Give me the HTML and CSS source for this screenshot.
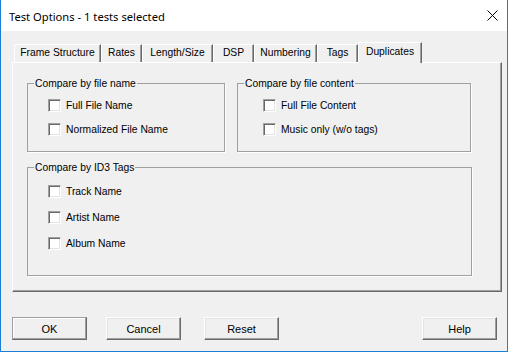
FILE: index.html
```html
<!DOCTYPE html>
<html lang="en">
<head>
  <meta charset="utf-8">
  <title>Test Options - 1 tests selected</title>
  <link rel="stylesheet" href="styles.css">
</head>
<body>
  <div class="window">
    <div class="titlebar">
      <span class="title">Test Options - 1 tests selected</span>
      <svg class="close" width="11" height="11" viewBox="0 0 11 11">
        <path d="M0.5 0.5 L10.5 10.5 M10.5 0.5 L0.5 10.5" stroke="#000" stroke-width="1" fill="none"/>
      </svg>
    </div>

    <div class="client">
      <div class="tabs">
        <div class="tab t-frame">Frame Structure</div>
        <div class="tab t-rates">Rates</div>
        <div class="tab t-length">Length/Size</div>
        <div class="tab t-dsp">DSP</div>
        <div class="tab t-num">Numbering</div>
        <div class="tab t-tags">Tags</div>
        <div class="tab t-dup active">Duplicates</div>
      </div>

      <div class="panel">
        <fieldset class="group g-name">
          <legend>Compare by file name</legend>
          <div class="rows">
            <label class="row"><span class="check"></span>Full File Name</label>
            <label class="row"><span class="check"></span>Normalized File Name</label>
          </div>
        </fieldset>

        <fieldset class="group g-content">
          <legend>Compare by file content</legend>
          <div class="rows">
            <label class="row"><span class="check"></span>Full File Content</label>
            <label class="row"><span class="check"></span>Music only (w/o tags)</label>
          </div>
        </fieldset>

        <fieldset class="group g-id3">
          <legend>Compare by ID3 Tags</legend>
          <div class="rows">
            <label class="row"><span class="check"></span>Track Name</label>
            <label class="row"><span class="check"></span>Artist Name</label>
            <label class="row"><span class="check"></span>Album Name</label>
          </div>
        </fieldset>
      </div>

      <div class="actions">
        <button class="btn default">OK</button>
        <button class="btn b-cancel">Cancel</button>
        <button class="btn b-reset">Reset</button>
        <button class="btn b-help">Help</button>
      </div>
    </div>
  </div>
</body>
</html>
```

FILE: styles.css
```css
*{
  margin: 0;
  padding: 0;
  box-sizing: border-box;
}

body{
  background: #fff;
  font-family: "Liberation Sans", Arial, sans-serif;
  font-size: 10.3px;
  color: #000;
}

.window{
  width: 508px;
  height: 352px;
  display: flex;
  flex-direction: column;
  border: 1px solid #1c7fd6;
  border-top: 0;
}

.titlebar{
  height: 31px;
  flex: none;
  background: #fff;
  display: flex;
  align-items: center;
  justify-content: space-between;
  padding: 0 9px 0 8px;
}

.title{
  font-family: "Noto Sans", "Open Sans", sans-serif;
  font-size: 11.2px;
  padding-top: 1px;
}

.close{
  display: block;
}

.client{
  flex: 1;
  background: #f0f0f0;
  padding: 11px 10px 0 11px;
  display: flex;
  flex-direction: column;
}

/* tab strip */
.tabs{
  height: 20px;
  display: flex;
  align-items: flex-end;
  padding-left: 2px;
}

.tab{
  height: 18px;
  line-height: 16px;
  text-align: center;
  border: 1px solid;
  border-color: #fff #696969 transparent #fff;
  border-bottom: 0;
  box-shadow: inset -1px 0 0 #a0a0a0;
  white-space: nowrap;
}

.t-frame{ width: 87px; }
.t-rates{ width: 41px; }
.t-length{ width: 71px; }
.t-dsp{ width: 41px; }
.t-num{ width: 63px; }
.t-tags{ width: 41px; }
.t-dup{ width: 64px; }

.tab.active{
  height: 21px;
  line-height: 17px;
  margin-bottom: -1px;
  background: #f0f0f0;
  position: relative;
  z-index: 1;
}

/* tab page */
.panel{
  width: 490px;
  height: 230px;
  border: 1px solid;
  border-color: #fff #696969 #696969 #fff;
  box-shadow: inset -1px -1px 0 #a0a0a0;
  padding: 14px 0 0 14px;
  display: grid;
  grid-template-columns: 198px 234px;
  column-gap: 12px;
  row-gap: 9px;
  align-content: start;
}

.group{
  border: 1px solid #a0a0a0;
  box-shadow: 1px 1px 0 #fff;
  min-width: 0;
}

.group legend{
  margin-left: 6px;
  padding: 0 1px;
  line-height: 13px;
}

.g-id3{
  grid-column: 1 / 3;
  width: 445px;
}

.rows{
  display: flex;
  flex-direction: column;
  padding: 9px 0 15px 20px;
  row-gap: 11px;
}

.g-content .rows{
  padding-left: 25px;
}

.g-id3 .rows{
  padding: 11px 0 25px 20px;
  row-gap: 13px;
}

.row{
  height: 13px;
  display: flex;
  align-items: center;
  gap: 5px;
}

.check{
  width: 13px;
  height: 13px;
  flex: none;
  background: #fff;
  border: 1px solid;
  border-color: #a0a0a0 #fff #fff #a0a0a0;
  box-shadow: inset 1px 1px 0 #696969, inset -1px -1px 0 #e3e3e3;
}

/* buttons */
.actions{
  display: flex;
  margin-top: 25px;
}

.btn{
  width: 75px;
  height: 23px;
  font-family: "Liberation Sans", Arial, sans-serif;
  font-size: 11px;
  color: #000;
  background: #f0f0f0;
  border: 1px solid;
  border-color: #fff #696969 #696969 #fff;
  box-shadow: inset -1px -1px 0 #a0a0a0, inset 1px 1px 0 #e3e3e3;
}

.btn.default{
  border-color: #a0a0a0 #696969 #696969 #a0a0a0;
  box-shadow: inset -1px -1px 0 #a0a0a0, inset 1px 1px 0 #fff;
}

.b-cancel{ margin-left: 19px; }
.b-reset{ margin-left: 23px; }
.b-help{ margin-left: auto; }
```
